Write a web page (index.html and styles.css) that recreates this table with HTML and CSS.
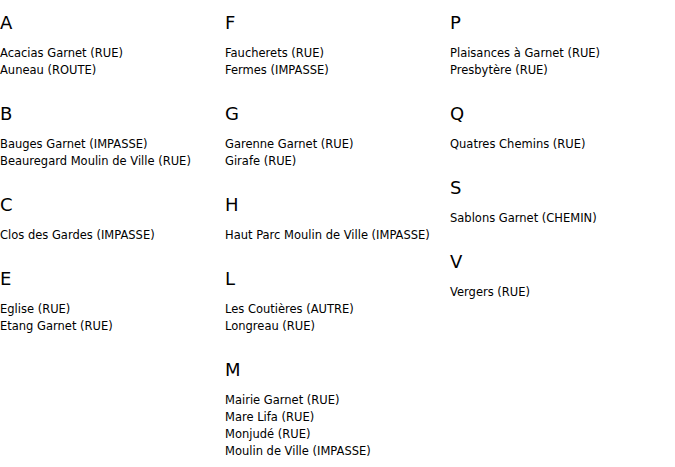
FILE: index.html
```html
<!DOCTYPE html>
<html lang="fr">
<head>
<meta charset="utf-8">
<title>Rues</title>
<link rel="stylesheet" href="styles.css">
</head>
<body>
<div class="index">
  <div class="col">
    <section class="group"><h2 class="letter">A</h2>
      <ul class="streets"><li>Acacias Garnet (RUE)</li><li>Auneau (ROUTE)</li></ul></section>
    <section class="group"><h2 class="letter">B</h2>
      <ul class="streets"><li>Bauges Garnet (IMPASSE)</li><li>Beauregard Moulin de Ville (RUE)</li></ul></section>
    <section class="group"><h2 class="letter">C</h2>
      <ul class="streets"><li>Clos des Gardes (IMPASSE)</li></ul></section>
    <section class="group"><h2 class="letter">E</h2>
      <ul class="streets"><li>Eglise (RUE)</li><li>Etang Garnet (RUE)</li></ul></section>
  </div>
  <div class="col">
    <section class="group"><h2 class="letter">F</h2>
      <ul class="streets"><li>Faucherets (RUE)</li><li>Fermes (IMPASSE)</li></ul></section>
    <section class="group"><h2 class="letter">G</h2>
      <ul class="streets"><li>Garenne Garnet (RUE)</li><li>Girafe (RUE)</li></ul></section>
    <section class="group"><h2 class="letter">H</h2>
      <ul class="streets"><li>Haut Parc Moulin de Ville (IMPASSE)</li></ul></section>
    <section class="group"><h2 class="letter">L</h2>
      <ul class="streets"><li>Les Coutières (AUTRE)</li><li>Longreau (RUE)</li></ul></section>
    <section class="group"><h2 class="letter">M</h2>
      <ul class="streets"><li>Mairie Garnet (RUE)</li><li>Mare Lifa (RUE)</li><li>Monjudé (RUE)</li><li>Moulin de Ville (IMPASSE)</li></ul></section>
  </div>
  <div class="col">
    <section class="group"><h2 class="letter">P</h2>
      <ul class="streets"><li>Plaisances à Garnet (RUE)</li><li>Presbytère (RUE)</li></ul></section>
    <section class="group"><h2 class="letter">Q</h2>
      <ul class="streets"><li>Quatres Chemins (RUE)</li></ul></section>
    <section class="group"><h2 class="letter">S</h2>
      <ul class="streets"><li>Sablons Garnet (CHEMIN)</li></ul></section>
    <section class="group"><h2 class="letter">V</h2>
      <ul class="streets"><li>Vergers (RUE)</li></ul></section>
  </div>
</div>
</body>
</html>
```
FILE: styles.css
```css
html, body {
  margin: 0;
  padding: 0;
  background: #fff;
}
body {
  font-family: "DejaVu Sans", Verdana, sans-serif;
  color: #000;
}
.index {
  display: grid;
  grid-template-columns: 225px 225px 225px;
}
.col {
  padding-top: 12px;
}
.group {
  margin-bottom: 24px;
}
.letter {
  margin: 0 0 11px 0;
  font-size: 18px;
  line-height: 22px;
  font-weight: normal;
}
.streets {
  list-style: none;
  margin: 0;
  padding: 0;
  font-size: 11.5px;
  line-height: 17px;
}
```
